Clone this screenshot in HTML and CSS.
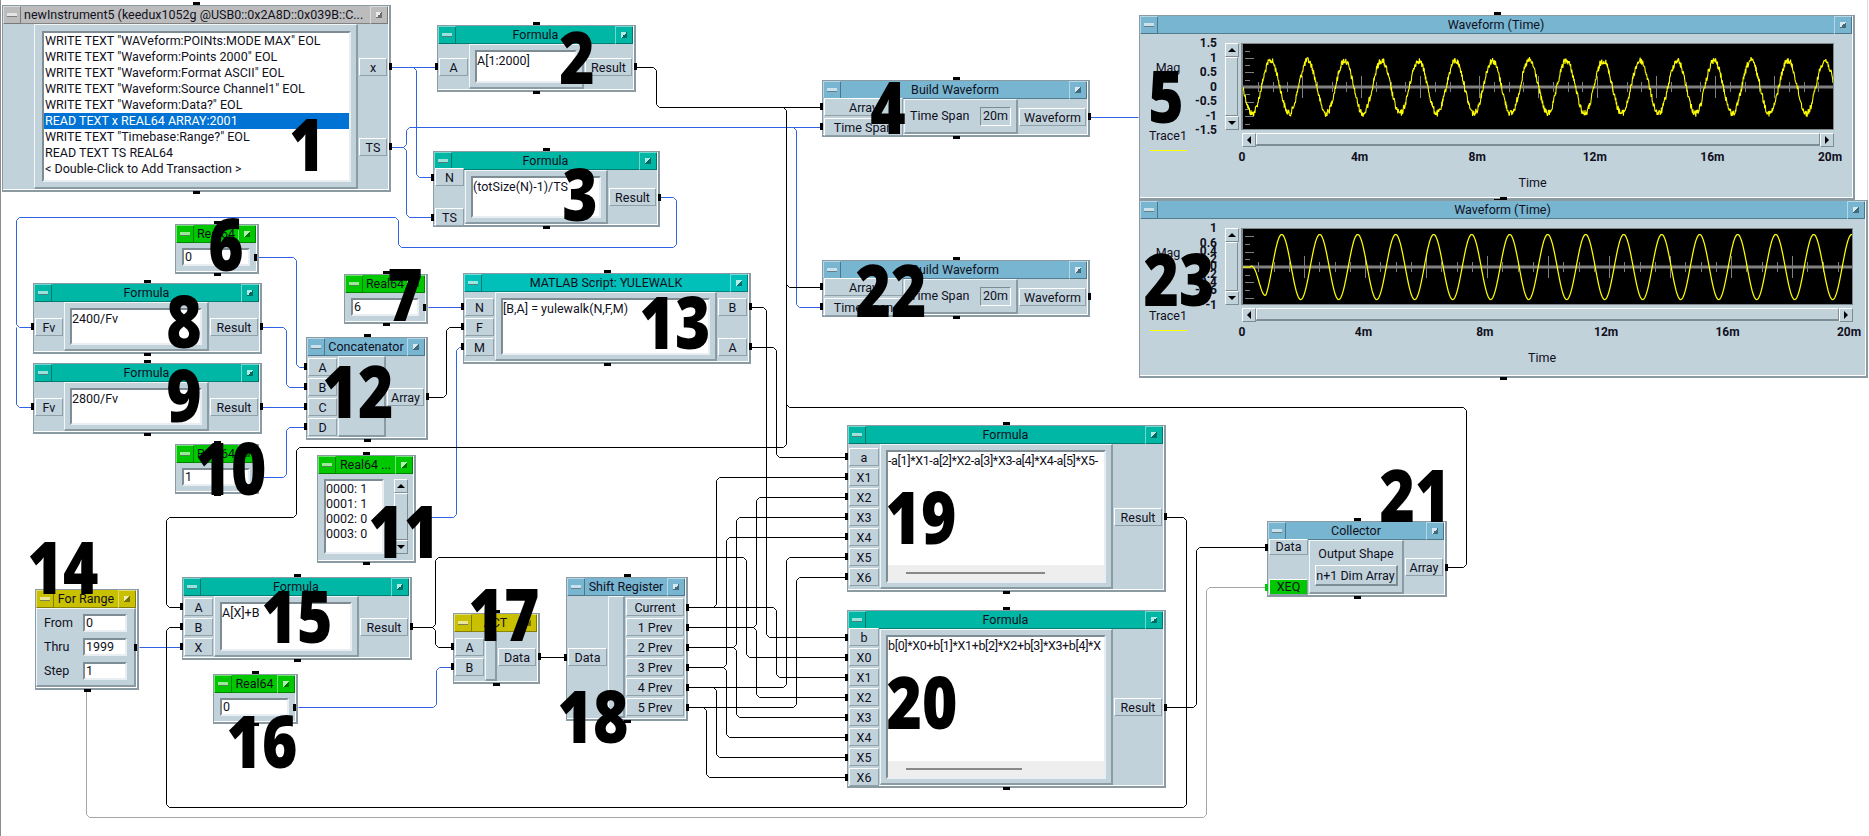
FILE: index.html
```html
<!DOCTYPE html>
<html lang="en">
<head>
<meta charset="utf-8">
<title>VEE program</title>
<link rel="stylesheet" href="styles.css">
</head>
<body>
<main class="canvas">
<svg class="wires" id="wires" width="1869" height="836" aria-hidden="true"></svg>

<section class="node n1 t-gray">
  <header class="title"><i class="min"></i><span class="name left">newInstrument5 (keedux1052g @USB0::0x2A8D::0x039B::C...</span><i class="max"></i></header>
  <div class="body">
    <div class="pins in"></div>
    <div class="center pad">
      <div class="field list">
        <div>WRITE TEXT "WAVeform:POINts:MODE MAX" EOL</div>
        <div>WRITE TEXT "Waveform:Points 2000" EOL</div>
        <div>WRITE TEXT "Waveform:Format ASCII" EOL</div>
        <div>WRITE TEXT "Waveform:Source Channel1" EOL</div>
        <div>WRITE TEXT "Waveform:Data?" EOL</div>
        <div class="sel">READ TEXT x REAL64 ARRAY:2001</div>
        <div>WRITE TEXT "Timebase:Range?" EOL</div>
        <div>READ TEXT TS REAL64</div>
        <div>&lt; Double-Click to Add Transaction &gt;</div>
      </div>
    </div>
    <div class="pins out g62"><div class="port">x</div><div class="port">TS</div></div>
  </div>
</section>

<section class="node n2 t-teal">
  <header class="title"><i class="min"></i><span class="name">Formula</span><i class="max"></i></header>
  <div class="body">
    <div class="pins in"><div class="port">A</div></div>
    <div class="center pad"><div class="field">A[1:2000]</div></div>
    <div class="pins out"><div class="port">Result</div></div>
  </div>
</section>

<section class="node n3 t-teal">
  <header class="title"><i class="min"></i><span class="name">Formula</span><i class="max"></i></header>
  <div class="body">
    <div class="pins in g22"><div class="port">N</div><div class="port">TS</div></div>
    <div class="center pad"><div class="field">(totSize(N)-1)/TS</div></div>
    <div class="pins out"><div class="port">Result</div></div>
  </div>
</section>

<section class="node n4 t-blue">
  <header class="title"><i class="min"></i><span class="name">Build Waveform</span><i class="max"></i></header>
  <div class="body">
    <div class="pins in"><div class="port">Array</div><div class="port">Time Span</div></div>
    <div class="center span-row"><span>Time Span</span><span class="box">20m</span></div>
    <div class="pins out"><div class="port">Waveform</div></div>
  </div>
</section>

<section class="node n22 t-blue">
  <header class="title"><i class="min"></i><span class="name">Build Waveform</span><i class="max"></i></header>
  <div class="body">
    <div class="pins in"><div class="port">Array</div><div class="port">Time Span</div></div>
    <div class="center span-row"><span>Time Span</span><span class="box">20m</span></div>
    <div class="pins out"><div class="port">Waveform</div></div>
  </div>
</section>

<section class="node scope n5 t-blue">
  <header class="title"><i class="min"></i><span class="name">Waveform (Time)</span><i class="max"></i></header>
  <div class="scope-body">
    <div class="legend"><span class="mag">Mag</span><span class="trace">Trace1</span><span class="tline"></span></div>
    <div class="ylabels"><span>1.5</span><span>1</span><span>0.5</span><span>0</span><span>-0.5</span><span>-1</span><span>-1.5</span></div>
    <div class="yscroll"><i class="sbtn up"></i><i class="strack"></i><i class="sbtn down"></i></div>
    <div class="plot" id="plot1"></div>
    <div class="xscroll"><i class="sbtn lft"></i><i class="strack"></i><i class="sbtn rgt"></i></div>
    <div class="xlabels"><span>0</span><span>4m</span><span>8m</span><span>12m</span><span>16m</span><span>20m</span></div>
    <div class="xname">Time</div>
  </div>
</section>

<section class="node scope n23 t-blue">
  <header class="title"><i class="min"></i><span class="name">Waveform (Time)</span><i class="max"></i></header>
  <div class="scope-body">
    <div class="legend"><span class="mag">Mag</span><span class="trace">Trace1</span><span class="tline"></span></div>
    <div class="ylabels"><span>1</span><span></span><span>0.6</span><span>0.4</span><span>0.2</span><span>0</span><span>-0.2</span><span>-0.4</span><span>-0.6</span><span></span><span>-1</span></div>
    <div class="yscroll"><i class="sbtn up"></i><i class="strack"></i><i class="sbtn down"></i></div>
    <div class="plot" id="plot2"></div>
    <div class="xscroll"><i class="sbtn lft"></i><i class="strack"></i><i class="sbtn rgt"></i></div>
    <div class="xlabels"><span>0</span><span>4m</span><span>8m</span><span>12m</span><span>16m</span><span>20m</span></div>
    <div class="xname">Time</div>
  </div>
</section>

<section class="node real n6 t-green">
  <header class="title"><i class="min"></i><span class="name">Real64</span><i class="max"></i></header>
  <div class="real-body"><div class="field value pin-r">0</div></div>
</section>

<section class="node real n7 t-green">
  <header class="title"><i class="min"></i><span class="name">Real64</span><i class="max"></i></header>
  <div class="real-body"><div class="field value pin-r">6</div></div>
</section>

<section class="node real n10 t-green">
  <header class="title"><i class="min"></i><span class="name">Real64</span><i class="max"></i></header>
  <div class="real-body"><div class="field value pin-r">1</div></div>
</section>

<section class="node real n16 t-green">
  <header class="title"><i class="min"></i><span class="name">Real64</span><i class="max"></i></header>
  <div class="real-body"><div class="field value pin-r">0</div></div>
</section>

<section class="node n8 t-teal">
  <header class="title"><i class="min"></i><span class="name">Formula</span><i class="max"></i></header>
  <div class="body">
    <div class="pins in"><div class="port">Fv</div></div>
    <div class="center pad"><div class="field">2400/Fv</div></div>
    <div class="pins out"><div class="port">Result</div></div>
  </div>
</section>

<section class="node n9 t-teal">
  <header class="title"><i class="min"></i><span class="name">Formula</span><i class="max"></i></header>
  <div class="body">
    <div class="pins in"><div class="port">Fv</div></div>
    <div class="center pad"><div class="field">2800/Fv</div></div>
    <div class="pins out"><div class="port">Result</div></div>
  </div>
</section>

<section class="node n12 t-blue">
  <header class="title"><i class="min"></i><span class="name">Concatenator</span><i class="max"></i></header>
  <div class="body">
    <div class="pins in"><div class="port">A</div><div class="port">B</div><div class="port">C</div><div class="port">D</div></div>
    <div class="center"></div>
    <div class="pins out"><div class="port">Array</div></div>
  </div>
</section>

<section class="node n13 t-matlab">
  <header class="title"><i class="min"></i><span class="name">MATLAB Script: YULEWALK</span><i class="max"></i></header>
  <div class="body">
    <div class="pins in"><div class="port">N</div><div class="port">F</div><div class="port">M</div></div>
    <div class="center pad"><div class="field">[B,A] = yulewalk(N,F,M)</div></div>
    <div class="pins out g22"><div class="port">B</div><div class="port">A</div></div>
  </div>
</section>

<section class="node n11 t-green">
  <header class="title"><i class="min"></i><span class="name">Real64 ...</span><i class="max"></i></header>
  <div class="array-body">
    <div class="field rows"><div>0000: 1</div><div>0001: 1</div><div>0002: 0</div><div>0003: 0</div></div>
    <div class="yscroll"><i class="sbtn up"></i><i class="strack"></i><i class="sbtn down"></i></div>
  </div>
</section>

<section class="node n14 t-yellow">
  <header class="title"><i class="min"></i><span class="name">For Range</span><i class="max"></i></header>
  <div class="center range">
    <div class="range-row"><span>From</span><div class="field value">0</div></div>
    <div class="range-row pin-row"><span>Thru</span><div class="field value">1999</div></div>
    <div class="range-row"><span>Step</span><div class="field value">1</div></div>
  </div>
</section>

<section class="node n15 t-teal">
  <header class="title"><i class="min"></i><span class="name">Formula</span><i class="max"></i></header>
  <div class="body">
    <div class="pins in"><div class="port">A</div><div class="port">B</div><div class="port">X</div></div>
    <div class="center pad"><div class="field">A[X]+B</div></div>
    <div class="pins out"><div class="port">Result</div></div>
  </div>
</section>

<section class="node n17 t-yellow">
  <header class="title"><i class="min"></i><span class="name">ACT</span><i class="max"></i></header>
  <div class="body">
    <div class="pins in"><div class="port">A</div><div class="port">B</div></div>
    <div class="center"></div>
    <div class="pins out"><div class="port">Data</div></div>
  </div>
</section>

<section class="node n18 t-blue">
  <header class="title"><i class="min"></i><span class="name">Shift Register</span><i class="max"></i></header>
  <div class="body">
    <div class="pins in"><div class="port">Data</div></div>
    <div class="center"></div>
    <div class="pins out"><div class="port">Current</div><div class="port">1 Prev</div><div class="port">2 Prev</div><div class="port">3 Prev</div><div class="port">4 Prev</div><div class="port">5 Prev</div></div>
  </div>
</section>

<section class="node n19 t-teal">
  <header class="title"><i class="min"></i><span class="name">Formula</span><i class="max"></i></header>
  <div class="body">
    <div class="pins in"><div class="port">a</div><div class="port">X1</div><div class="port">X2</div><div class="port">X3</div><div class="port">X4</div><div class="port">X5</div><div class="port">X6</div></div>
    <div class="center pad"><div class="field long"><span class="expr">-a[1]*X1-a[2]*X2-a[3]*X3-a[4]*X4-a[5]*X5-</span><div class="strip"><i class="thumb"></i></div></div></div>
    <div class="pins out"><div class="port">Result</div></div>
  </div>
</section>

<section class="node n20 t-teal">
  <header class="title"><i class="min"></i><span class="name">Formula</span><i class="max"></i></header>
  <div class="body">
    <div class="pins in"><div class="port">b</div><div class="port">X0</div><div class="port">X1</div><div class="port">X2</div><div class="port">X3</div><div class="port">X4</div><div class="port">X5</div><div class="port">X6</div></div>
    <div class="center pad"><div class="field long"><span class="expr">b[0]*X0+b[1]*X1+b[2]*X2+b[3]*X3+b[4]*X</span><div class="strip"><i class="thumb"></i></div></div></div>
    <div class="pins out"><div class="port">Result</div></div>
  </div>
</section>

<section class="node n21 t-blue">
  <header class="title"><i class="min"></i><span class="name">Collector</span><i class="max"></i></header>
  <div class="body">
    <div class="pins in g24"><div class="port short">Data</div><div class="port short xeq">XEQ</div></div>
    <div class="center collect"><span>Output Shape</span><div class="btn">n+1 Dim Array</div></div>
    <div class="pins out"><div class="port">Array</div></div>
  </div>
</section>

<b class="num no1">1</b><b class="num no2">2</b><b class="num no3">3</b><b class="num no4">4</b><b class="num no5">5</b><b class="num no6">6</b><b class="num no7">7</b><b class="num no8">8</b><b class="num no9">9</b><b class="num no10">10</b><b class="num no11">11</b><b class="num no12">12</b><b class="num no13">13</b><b class="num no14">14</b><b class="num no15">15</b><b class="num no16">16</b><b class="num no17">17</b><b class="num no18">18</b><b class="num no19">19</b><b class="num no20">20</b><b class="num no21">21</b><b class="num no22">22</b><b class="num no23">23</b>
</main>
<script src="script.js"></script>
</body>
</html>
```

FILE: styles.css
```css
* { box-sizing: border-box; }
html, body { margin: 0; padding: 0; background: #fff; overflow: hidden; }

.canvas {
  position: relative;
  width: 1869px;
  height: 836px;
  overflow: hidden;
  background: #fff;
  border-left: 1px solid #8c8c8c;
  font: 12.5px/16px Roboto, "Liberation Sans", Arial, sans-serif;
  color: #10101c;
  --panel: #c1d2db;
  --edge: #8a9ba4;
  --sunk: #7e8c94;
}
.canvas::after {
  content: "";
  position: absolute;
  right: 1px;
  top: 0;
  width: 1px;
  height: 200px;
  background: #dcdcdc;
}
.wires { position: absolute; left: -1px; top: 0; }

/* node shell */
.node {
  position: absolute;
  display: flex;
  flex-direction: column;
  background: var(--panel);
  border: solid var(--edge);
  border-width: 1px 2px 2px 1px;
  padding: 0 1px 1px 0;
  box-shadow: inset -1px -1px 0 #fff;
}
.node::before, .node::after {
  content: "";
  position: absolute;
  left: 50%;
  width: 7px;
  height: 3px;
  margin-left: -3px;
  background: #000;
}
.node::before { top: -4px; }
.node::after { bottom: -4px; }

.title {
  flex: none;
  display: flex;
  height: 18px;
  background: var(--bar);
  box-shadow: inset 0 -1px 0 rgba(0,0,0,.3);
}
.name { flex: 1; min-width: 0; text-align: center; line-height: 17px; white-space: nowrap; overflow: hidden; }
.name.left { text-align: left; padding-left: 3px; }
.min, .max {
  flex: none;
  position: relative;
  width: 18px;
  background: var(--bar);
  box-shadow: inset 1px 1px 0 rgba(255,255,255,.45), inset -1px -1px 0 rgba(0,0,0,.35);
}
.min::after {
  content: "";
  position: absolute;
  left: 4px;
  top: 7px;
  width: 10px;
  height: 3px;
  background: rgba(255,255,255,.6);
  border-bottom: 1px solid rgba(0,0,0,.45);
}
.max::after {
  content: "";
  position: absolute;
  left: 6px;
  top: 6px;
  width: 6px;
  height: 6px;
  background: linear-gradient(135deg, rgba(255,255,255,.7) 50%, rgba(0,0,0,.42) 50%);
}
.t-teal { --bar: #00b7a6; }
.t-matlab { --bar: #00c0b9; }
.t-blue { --bar: #78b5d1; }
.t-green { --bar: #00c800; }
.t-yellow { --bar: #c8c000; }
.t-gray { --bar: #bcbcbc; }

/* inner panels */
.body { flex: 1; display: flex; min-height: 0; }
.pins { flex: none; display: flex; flex-direction: column; justify-content: center; gap: 2px; padding: 0 1px; }
.pins.in { width: var(--in); }
.pins.out { width: var(--out); }
.g22 { gap: 22px; }
.g24 { gap: 24px; }
.g62 { gap: 62px; }
.port {
  position: relative;
  flex: none;
  height: 18px;
  line-height: 17px;
  text-align: center;
  white-space: nowrap;
  background: var(--panel);
  border: 1px solid;
  border-color: #fff #8fa0a9 #8fa0a9 #fff;
}
.port.short { height: 16px; line-height: 14px; }
.port.xeq { background: #00c800; }
.in .port::before, .out .port::after, .pin-r::after, .pin-row::after {
  content: "";
  position: absolute;
  top: 50%;
  margin-top: -3.5px;
  width: 3px;
  height: 7px;
  background: #000;
}
.in .port::before { left: -5px; }
.out .port::after { right: -6px; }
.in .port.xeq::before { background: #00c800; }

.center {
  flex: 1;
  min-width: 0;
  background: var(--panel);
  border: 1px solid;
  border-width: 1px 2px 2px 1px;
  border-color: #f2f6f8 var(--edge) var(--edge) #f2f6f8;
}
.center.pad { display: flex; padding: 5px 5px 4px 5px; }
.n1 .center.pad { padding: 6px 5px 5px 7px; }
.field {
  flex: 1;
  min-width: 0;
  background: #fff;
  border: 2px solid;
  border-color: var(--sunk) #e8eef1 #e8eef1 var(--sunk);
  padding: 1px 0 0 0;
  white-space: nowrap;
  overflow: hidden;
}
.span-row { display: flex; align-items: center; justify-content: space-between; padding: 0 5px; }
.box { width: 31px; height: 19px; line-height: 16px; text-align: center; border: 1px solid; border-color: var(--sunk) #fff #fff var(--sunk); }
.list { padding: 0 0 0 1px; }
.list .sel { background: #0073d4; color: #fff; margin: 0 0 0 -1px; padding-left: 1px; }

/* small value nodes */
.real-body { flex: 1; display: flex; align-items: center; padding: 0 6px; }
.value { height: 18px; flex: 1; line-height: 13px; padding: 0 0 0 1px; overflow: visible; position: relative; }
.pin-r::after { right: -9px; }
.array-body { flex: 1; display: flex; gap: 2px; padding: 5px 5px 6px 6px; }
.rows { line-height: 15px; padding-top: 0; }
.n11 .yscroll { height: 75px; width: 14px; }

.range { display: flex; flex-direction: column; justify-content: center; gap: 6px; padding: 0 7px; }
.range-row { display: flex; align-items: center; }
.range-row span { width: 39px; }
.range-row .value { flex: 1; }
.pin-row { position: relative; }
.pin-row::after { right: -10px; }

.long { display: flex; flex-direction: column; padding: 0; }
.expr { padding: 1px 0 0 0; overflow: hidden; letter-spacing: -.35px; }
.strip { margin-top: auto; flex: none; height: 16px; background: #eee; padding: 7px 0 0 18px; }
.thumb { display: block; height: 2px; background: #888; }
.n19 .thumb { width: 139px; }
.n20 .thumb { width: 116px; }

.collect { display: flex; flex-direction: column; align-items: center; padding-top: 5px; gap: 3px; }
.btn { width: 83px; height: 21px; line-height: 19px; text-align: center; white-space: nowrap; border: 1px solid; border-width: 1px 2px 2px 1px; border-color: #fff var(--sunk) var(--sunk) #fff; }

/* scope */
.scope-body {
  flex: 1;
  min-height: 0;
  display: grid;
  grid-template-columns: 60px 17px 14px 1fr;
  grid-template-rows: var(--plot) 13px 12px 16px;
  column-gap: 0;
  row-gap: 3px;
  padding: 9px var(--rpad) 0 0;
}
.legend { grid-column: 1; grid-row: 1 / 4; display: flex; flex-direction: column; align-items: center; padding-right: 4px; }
.mag { margin-top: 17px; }
.trace { margin-top: var(--gap); }
.tline { width: 37px; height: 1px; background: #ff0; margin-top: 6px; }
.ylabels {
  grid-column: 2;
  grid-row: 1;
  display: flex;
  flex-direction: column;
  justify-content: space-between;
  align-items: flex-end;
  font-size: 12px;
  font-weight: 700;
}
.ylabels span { height: 0; line-height: 0; }
.yscroll { grid-column: 3; grid-row: 1; margin-left: 8px; width: 13px; display: flex; flex-direction: column; justify-self: start; flex: none; }
.plot { grid-column: 4; grid-row: 1; position: relative; margin-left: 10px; background: #000; border: 1px solid #80888c; border-left-width: 2px; overflow: hidden; }
.plot svg { position: absolute; left: 0; top: 0; display: block; }
.xscroll { grid-column: 4; grid-row: 2; margin-left: 11px; display: flex; border-bottom: 1px solid var(--sunk); }
.xlabels { grid-column: 4; grid-row: 3; margin: 2px 4px 0 11px; display: flex; justify-content: space-between; font-size: 12px; font-weight: 700; line-height: 12px; }
.xlabels span { width: 0; display: flex; justify-content: center; }
.xname { grid-column: 4; grid-row: 4; margin-top: 11px; text-align: center; }
.sbtn {
  position: relative;
  flex: none;
  width: 14px;
  height: 14px;
  background: var(--panel);
  border: 1px solid;
  border-color: #fff var(--sunk) var(--sunk) #fff;
}
.sbtn::after { content: ""; position: absolute; left: 50%; top: 50%; width: 0; height: 0; border: 4px solid transparent; }
.up::after { margin: -6px 0 0 -4px; border-bottom-color: #000; }
.down::after { margin: -2px 0 0 -4px; border-top-color: #000; }
.lft::after { margin: -4px 0 0 -6px; border-right-color: #000; }
.rgt::after { margin: -4px 0 0 -2px; border-left-color: #000; }
.strack { flex: 1; display: block; background: var(--panel); border: 1px solid; border-color: #fff var(--sunk) var(--sunk) #fff; }

/* node placement on the diagram */
.n1 { left: 1px; top: 5px; width: 389px; height: 187px; --in: 31px; --out: 30px; }
.n2 { left: 436px; top: 25px; width: 199px; height: 67px; --in: 31px; --out: 49px; }
.n3 { left: 432px; top: 151px; width: 227px; height: 76px; --in: 31px; --out: 49px; }
.n4 { left: 821px; top: 80px; width: 268px; height: 57px; --in: 81px; --out: 69px; }
.n22 { left: 821px; top: 260px; width: 268px; height: 57px; --in: 81px; --out: 69px; }
.n5 { left: 1138px; top: 15px; width: 716px; height: 185px; --plot: 87px; --rpad: 18px; --gap: 52px; }
.n23 { left: 1138px; top: 200px; width: 729px; height: 178px; --plot: 77px; --rpad: 12px; --gap: 47px; }
.n6 { left: 174px; top: 224px; width: 84px; height: 50px; }
.n7 { left: 343px; top: 274px; width: 84px; height: 50px; }
.n10 { left: 174px; top: 444px; width: 84px; height: 50px; }
.n16 { left: 212px; top: 674px; width: 85px; height: 50px; }
.n8 { left: 32px; top: 283px; width: 229px; height: 71px; --in: 30px; --out: 50px; }
.n9 { left: 32px; top: 363px; width: 229px; height: 71px; --in: 30px; --out: 50px; }
.n11 { left: 316px; top: 455px; width: 99px; height: 108px; }
.n12 { left: 305px; top: 337px; width: 122px; height: 103px; --in: 31px; --out: 39px; }
.n13 { left: 462px; top: 273px; width: 288px; height: 91px; --in: 31px; --out: 31px; }
.n14 { left: 34px; top: 589px; width: 104px; height: 101px; }
.n15 { left: 181px; top: 577px; width: 230px; height: 83px; --in: 31px; --out: 50px; }
.n17 { left: 452px; top: 613px; width: 87px; height: 71px; --in: 31px; --out: 40px; }
.n18 { left: 565px; top: 577px; width: 122px; height: 144px; --in: 41px; --out: 60px; }
.n19 { left: 846px; top: 425px; width: 319px; height: 167px; --in: 32px; --out: 50px; }
.n20 { left: 846px; top: 610px; width: 319px; height: 178px; --in: 32px; --out: 50px; }
.n21 { left: 1266px; top: 521px; width: 180px; height: 76px; --in: 41px; --out: 40px; }

/* big overlaid numbers */
.num {
  position: absolute;
  z-index: 5;
  height: 72px;
  margin: -1px 0 0 1px;
  font: 800 72px/72px "Open Sans", "Noto Sans", sans-serif;
  color: #000;
  transform: translateX(-50%) scaleX(.84);
  white-space: nowrap;
}
.no1 { left: 305px; top: 108px; }
.no2 { left: 575px; top: 21px; }
.no3 { left: 578px; top: 158px; }
.no4 { left: 886px; top: 71px; }
.no5 { left: 1164px; top: 60px; }
.no6 { left: 224px; top: 208px; }
.no7 { left: 403px; top: 258px; }
.no8 { left: 182px; top: 285px; }
.no9 { left: 182px; top: 359px; }
.no10 { left: 229px; top: 432px; }
.no11 { left: 402px; top: 495px; }
.no12 { left: 356px; top: 355px; }
.no13 { left: 673px; top: 286px; }
.no14 { left: 61px; top: 531px; }
.no15 { left: 295px; top: 580px; }
.no16 { left: 260px; top: 705px; }
.no17 { left: 502px; top: 578px; }
.no18 { left: 591px; top: 680px; }
.no19 { left: 919px; top: 481px; }
.no20 { left: 920px; top: 666px; }
.no21 { left: 1413px; top: 459px; }
.no22 { left: 889px; top: 254px; }
.no23 { left: 1177px; top: 243px; }
```

FILE: script.js
```js
(function () {
  var NS = 'http://www.w3.org/2000/svg';
  var BLUE = '#2f62e6', BLACK = '#000', GRAY = '#a6a6a6';

  // Each wire is a polyline of terminal and bend coordinates on the diagram.
  var wires = [
    [BLUE, [[390, 67], [437, 67]]],
    [BLUE, [[390, 67], [416, 67], [416, 177], [432, 177]]],
    [BLUE, [[390, 147], [406, 147], [406, 127], [822, 127]]],
    [BLUE, [[390, 147], [406, 147], [406, 217], [432, 217]]],
    [BLUE, [[780, 127], [796, 127], [796, 307], [822, 307]]],
    [BLUE, [[660, 197], [676, 197], [676, 247], [398, 247], [398, 217], [16, 217], [16, 327], [32, 327]]],
    [BLUE, [[16, 327], [16, 407], [32, 407]]],
    [BLUE, [[258, 257], [296, 257], [296, 367], [305, 367]]],
    [BLUE, [[261, 327], [286, 327], [286, 387], [305, 387]]],
    [BLUE, [[261, 407], [305, 407]]],
    [BLUE, [[260, 477], [286, 477], [286, 427], [305, 427]]],
    [BLUE, [[428, 307], [462, 307]]],
    [BLUE, [[415, 517], [456, 517], [456, 347], [462, 347]]],
    [BLUE, [[139, 647], [181, 647]]],
    [BLUE, [[298, 707], [436, 707], [436, 667], [452, 667]]],
    [BLUE, [[1090, 117], [1138, 117]]],

    [BLACK, [[636, 67], [656, 67], [656, 107], [822, 107]]],
    [BLACK, [[770, 107], [786, 107], [786, 287], [822, 287]]],
    [BLACK, [[786, 280], [786, 447], [296, 447], [296, 517], [166, 517], [166, 607], [181, 607]]],
    [BLACK, [[1447, 567], [1466, 567], [1466, 407], [786, 407], [786, 395]]],
    [BLACK, [[428, 397], [446, 397], [446, 327], [462, 327]]],
    [BLACK, [[751, 307], [766, 307], [766, 637], [846, 637]]],
    [BLACK, [[751, 347], [776, 347], [776, 457], [846, 457]]],
    [BLACK, [[412, 627], [435, 627], [435, 557], [746, 557], [746, 657], [846, 657]]],
    [BLACK, [[412, 627], [435, 627], [435, 647], [452, 647]]],
    [BLACK, [[540, 657], [566, 657]]],
    [BLACK, [[688, 607], [776, 607], [776, 677], [846, 677]]],
    [BLACK, [[688, 607], [716, 607], [716, 477], [846, 477]]],
    [BLACK, [[688, 627], [756, 627], [756, 497], [846, 497]]],
    [BLACK, [[688, 627], [756, 627], [756, 697], [846, 697]]],
    [BLACK, [[688, 647], [736, 647], [736, 517], [846, 517]]],
    [BLACK, [[688, 647], [736, 647], [736, 717], [846, 717]]],
    [BLACK, [[688, 667], [726, 667], [726, 537], [846, 537]]],
    [BLACK, [[688, 667], [726, 667], [726, 737], [846, 737]]],
    [BLACK, [[688, 687], [786, 687], [786, 557], [846, 557]]],
    [BLACK, [[688, 687], [716, 687], [716, 757], [846, 757]]],
    [BLACK, [[688, 707], [796, 707], [796, 577], [846, 577]]],
    [BLACK, [[688, 707], [706, 707], [706, 777], [846, 777]]],
    [BLACK, [[1165, 517], [1186, 517], [1186, 807], [166, 807], [166, 627], [181, 627]]],
    [BLACK, [[1165, 707], [1196, 707], [1196, 547], [1266, 547]]],

    [GRAY, [[86, 690], [86, 817], [1206, 817], [1206, 587], [1266, 587]]]
  ];

  function el(name, attrs) {
    var node = document.createElementNS(NS, name);
    for (var k in attrs) node.setAttribute(k, attrs[k]);
    return node;
  }

  function wirePath(points) {
    var r = 3, d = '';
    points.forEach(function (p, i) {
      var x = p[0] + 0.5, y = p[1] + 0.5;
      if (i === 0 || i === points.length - 1) {
        d += (i ? 'L' : 'M') + x + ' ' + y;
        return;
      }
      var a = points[i - 1], b = points[i + 1];
      var ix = Math.sign(a[0] - p[0]), iy = Math.sign(a[1] - p[1]);
      var ox = Math.sign(b[0] - p[0]), oy = Math.sign(b[1] - p[1]);
      d += 'L' + (x + ix * r) + ' ' + (y + iy * r) + 'L' + (x + ox * r) + ' ' + (y + oy * r);
    });
    return d;
  }

  var svg = document.getElementById('wires');
  wires.forEach(function (w) {
    svg.appendChild(el('path', { d: wirePath(w[1]), fill: 'none', stroke: w[0], 'stroke-width': 1 }));
  });

  // Oscilloscope displays
  var seed = 12345;
  function rnd() {
    seed = (seed * 1103515245 + 12345) & 0x7fffffff;
    return seed / 0x7fffffff;
  }

  function drawPlot(id, cfg) {
    var host = document.getElementById(id);
    var w = host.clientWidth, h = host.clientHeight;
    var s = el('svg', { width: w, height: h });
    var grey = '#808080', g = '';
    var k;
    for (k = -6; k <= 6; k++) {
      var ty = cfg.mid + k * cfg.yStep;
      if (ty > 0 && ty < h) g += 'M2 ' + (Math.round(ty) + 0.5) + 'H' + (k % 2 ? 7 : 11);
    }
    for (k = 1; k * cfg.xStep < w; k++) {
      var tx = Math.round(k * cfg.xStep) + 0.5;
      var len = k % 4 === 0 ? 11 : 5;
      g += 'M' + tx + ' ' + (cfg.mid - len) + 'V' + (cfg.mid + len);
    }
    s.appendChild(el('path', { d: g, stroke: grey, 'stroke-width': 1, fill: 'none' }));
    s.appendChild(el('rect', { x: 0, y: cfg.mid - 1.5, width: w, height: 3, fill: grey }));
    var pts = [];
    for (var x = 0; x <= w; x += cfg.dx) pts.push(x.toFixed(1) + ',' + cfg.y(x).toFixed(1));
    s.appendChild(el('polyline', { points: pts.join(' '), fill: 'none', stroke: '#ffff00', 'stroke-width': cfg.sw, 'stroke-linejoin': 'bevel' }));
    host.appendChild(s);
  }

  drawPlot('plot1', {
    mid: 43, yStep: 7.3, xStep: 14.75, dx: 0.4, sw: 1.1,
    y: function (x) {
      return 43 + 26.5 * Math.sin(2 * Math.PI * x / 36.95) + (rnd() - 0.5) * 7;
    }
  });
  drawPlot('plot2', {
    mid: 38, yStep: 7.66, xStep: 15.25, dx: 0.5, sw: 1.25,
    y: function (x) {
      var env = x < 7 ? 0 : Math.min(1, (x - 7) / 16);
      return 38 - env * 32.5 * Math.cos(2 * Math.PI * (x - 38.7) / 38);
    }
  });
})();
```
